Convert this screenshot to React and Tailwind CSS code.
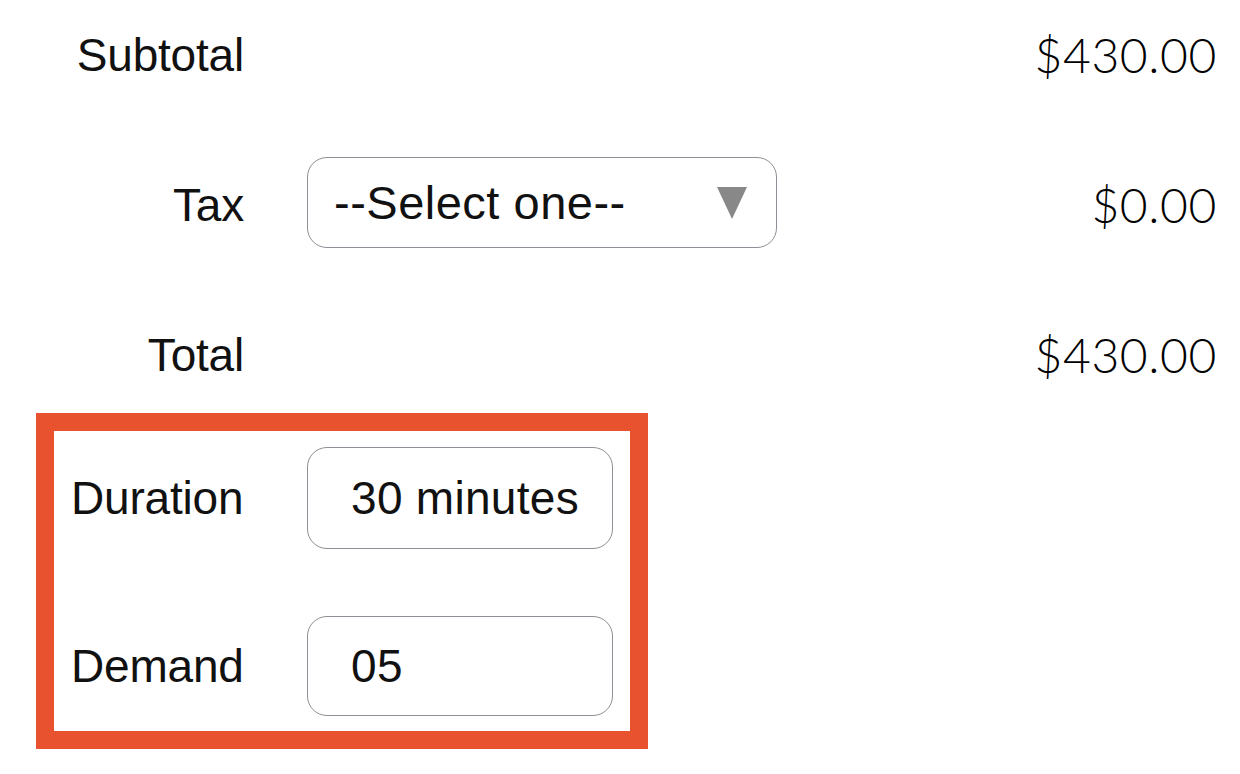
export default function App() {
  const label = "text-[46px] text-[#111] leading-none tracking-[-0.2px]";
  const value = "text-[48px] font-light text-black leading-none tracking-[0.6px]";

  return (
    <div
      className="w-[1240px] h-[774px] bg-white flex flex-col"
      style={{ fontFamily: '"Liberation Sans", Arial, sans-serif' }}
    >
      {/* Summary rows */}
      <div className="flex flex-col gap-[58px] pt-[9px]">
        <div className="flex items-center h-[92px]">
          <div className={`w-[244px] text-right ${label}`}>Subtotal</div>
          <div className={`flex-1 text-right pr-[23px] ${value}`} style={{ fontFamily: "Lato, sans-serif" }}>
            $430.00
          </div>
        </div>

        <div className="flex items-center h-[92px]">
          <div className={`w-[244px] text-right ${label}`}>Tax</div>
          <div className="ml-[63px] w-[470px] h-[91px] mt-[-5px] border-[1.5px] border-[#8e8e96] rounded-[20px] flex items-center justify-between pl-[26px] pr-[29px]">
            <span className="text-[47px] text-[#111] leading-none tracking-[0.5px]">--Select one--</span>
            <svg width="30" height="32" viewBox="0 0 30 32">
              <polygon points="0,0 30,0 15,32" fill="#888888" />
            </svg>
          </div>
          <div className={`flex-1 text-right pr-[23px] ${value}`} style={{ fontFamily: "Lato, sans-serif" }}>
            $0.00
          </div>
        </div>

        <div className="flex items-center h-[92px]">
          <div className={`w-[244px] text-right ${label}`}>Total</div>
          <div className={`flex-1 text-right pr-[23px] ${value}`} style={{ fontFamily: "Lato, sans-serif" }}>
            $430.00
          </div>
        </div>
      </div>

      {/* Highlighted fields */}
      <div className="ml-[36px] mt-[12px] w-[612px] h-[336px] border-[18px] border-[#e9522f] flex flex-col pt-[16px] pl-[17px] gap-[67px]">
        <div className="flex items-center">
          <div className={`w-[236px] ${label}`}>Duration</div>
          <div className="w-[306px] h-[102px] border-[1.5px] border-[#8e8e96] rounded-[20px] flex items-center pl-[43px]">
            <span className="text-[46px] text-[#111] leading-none tracking-[0.3px]">30 minutes</span>
          </div>
        </div>
        <div className="flex items-center">
          <div className={`w-[236px] ${label}`}>Demand</div>
          <div className="w-[306px] h-[100px] border-[1.5px] border-[#8e8e96] rounded-[20px] flex items-center pl-[43px]">
            <span className="text-[46px] text-[#111] leading-none tracking-[0.3px]">05</span>
          </div>
        </div>
      </div>
    </div>
  );
}
